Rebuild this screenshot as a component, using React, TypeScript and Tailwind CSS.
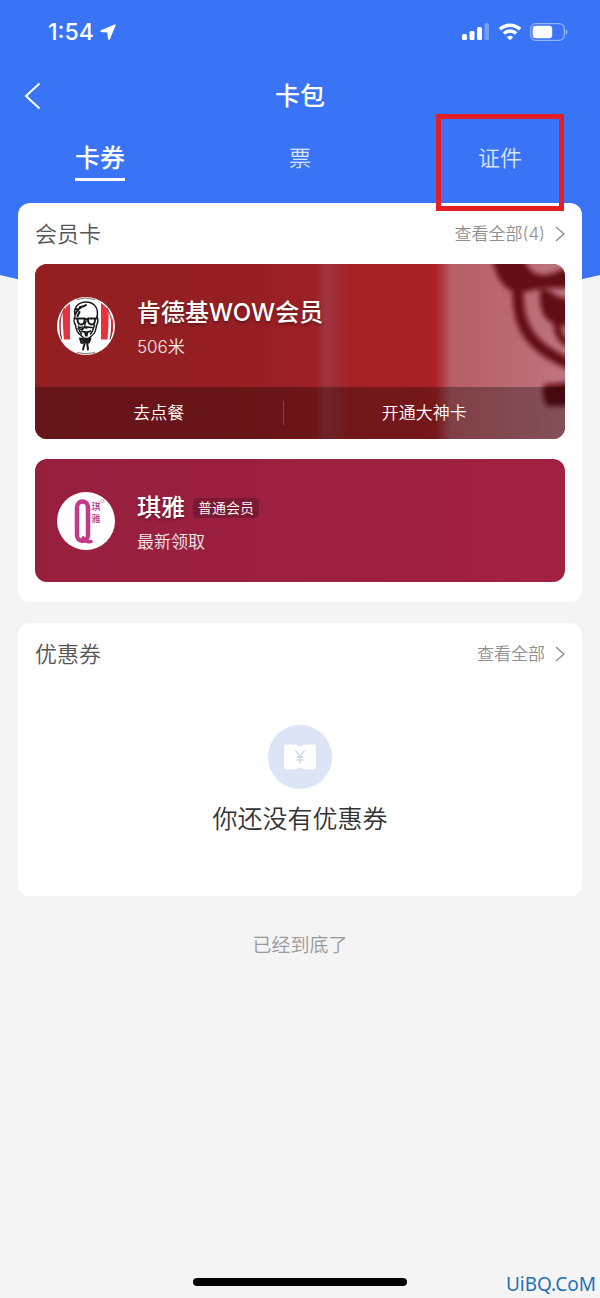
import React from "react";

const tabs = [
  { label: "卡券", active: true, marked: false },
  { label: "票", active: false, marked: false },
  { label: "证件", active: false, marked: true },
];

const StatusBar = () => {
  return (
    <div className="flex h-16 items-center justify-between pl-12 pr-8">
      <div className="flex items-center gap-1.5">
        <span className="text-[23px] font-medium leading-6">1:54</span>
        <svg width="16" height="17" viewBox="0 0 16 17" fill="currentColor">
          <path d="M14.600.4 1 6.300C-.1 6.800 0 7.900 1.200 8l6.100.5.8 6.600c.2 1.300 1.300 1.300 1.800.2L15.600 1.500C15.900.7 15.400.1 14.600.4Z" />
        </svg>
      </div>
      <div className="flex items-center gap-2">
        <svg width="28" height="18" viewBox="0 0 28 18" fill="currentColor">
          <rect x="0" y="11" width="5" height="6" rx="1.500" />
          <rect x="7.500" y="8" width="5" height="9" rx="1.500" />
          <rect x="15" y="4" width="5" height="13" rx="1.500" />
          <rect x="22.500" y="0" width="4.500" height="17" rx="1.500" opacity=".3" />
        </svg>
        <svg width="24" height="18" viewBox="0 0 24 18" fill="none" stroke="currentColor" strokeWidth="3.400">
          <path d="M1.900 6.300a14.500 14.500 0 0 1 20.200 0" />
          <path d="M5.900 10.500a8.800 8.800 0 0 1 12.200 0" />
          <path d="M12 17.300 8.900 14.200a4.500 4.500 0 0 1 6.200 0Z" fill="currentColor" stroke="none" />
        </svg>
        <svg width="38" height="18" viewBox="0 0 38 18" fill="none">
          <rect x=".7" y=".7" width="33.600" height="16.600" rx="5" stroke="currentColor" strokeWidth="1.300" opacity=".45" />
          <rect x="2.700" y="2.700" width="19.500" height="12.600" rx="3" fill="currentColor" />
          <path d="M35.800 6.300c2 .8 2 4.600 0 5.400Z" fill="currentColor" opacity=".5" />
        </svg>
      </div>
    </div>
  );
};

const Header = () => {
  return (
    <header className="relative z-10 text-white">
      <StatusBar />
      <div className="grid h-16 grid-cols-3 items-center px-6">
        <button type="button" aria-label="返回" className="justify-self-start">
          <svg width="18" height="28" viewBox="0 0 18 28" fill="none" stroke="currentColor" strokeWidth="2">
            <path d="M15.500 1.500 2 14l13.500 12.500" />
          </svg>
        </button>
        <h1 className="text-center text-[25px] font-medium leading-8">卡包</h1>
      </div>
      <nav className="grid h-[75px] grid-cols-3">
        {tabs.map((tab) => (
          <div key={tab.label} className="relative flex items-start justify-center pt-3">
            {tab.active ? (
              <button
                type="button"
                className="border-b-[3px] border-white pb-0.5 text-[25px] font-medium leading-9"
              >
                {tab.label}
              </button>
            ) : (
              <button type="button" className="text-[22px] font-[350] leading-9 text-white/80">
                {tab.label}
              </button>
            )}
            {tab.marked && (
              <span className="pointer-events-none absolute -bottom-2 -top-3.5 left-1/2 w-32 -translate-x-1/2 border-[5px] border-[#e31e25]" />
            )}
          </div>
        ))}
      </nav>
    </header>
  );
};

const SectionHead = ({ title, more }: { title: string; more: string }) => {
  return (
    <div className="flex h-[61px] items-center justify-between">
      <h2 className="text-[22px] font-[350] leading-8 text-[#555]">{title}</h2>
      <a href="#" className="flex items-center gap-2.5 text-[17px] font-[350] leading-6 text-[#8f8f8f]">
        {more}
        <svg width="10" height="16" viewBox="0 0 10 16" fill="none" stroke="currentColor" strokeWidth="1.500">
          <path d="m1 1 8 7-8 7" />
        </svg>
      </a>
    </div>
  );
};

const KfcLogo = () => {
  return (
    <svg className="shrink-0" width="58" height="58" viewBox="0 0 58 58">
      <defs>
        <clipPath id="kfc-round">
          <circle cx="29" cy="29" r="27.500" />
        </clipPath>
      </defs>
      <circle cx="29" cy="29" r="29" fill="#fff" />
      <g clipPath="url(#kfc-round)">
        <path d="M5.500 4H13v38.500H7Q5.500 30 5.500 4ZM44 4h7.500Q52 30 50.500 42.500H44Z" fill="#e5323c" />
        <path d="M2 14h1.800q-1 15 1 28.500H3ZM54.500 14H56v28.500h-2.800q2-14 1.300-28.500Z" fill="#e5323c" />
      </g>
      <path d="M4.800 42.500C2 32 2 20 7.500 11M53 42.500c3-11 2.500-22-3-31.500" fill="none" stroke="#5a2529" strokeWidth=".8" />
      <path d="M20 2.500q9-3 18 0M20 55.500q9 2.500 18 0" fill="none" stroke="#555" strokeWidth=".8" />
      <g fill="none" stroke="#191b1d" strokeWidth="1.500" strokeLinecap="round" strokeLinejoin="round">
        <path d="M18 18C16 10 22 5 29 5c8 0 13 6 11 15" />
        <path d="M18 19c-1.500 3-1 7 .5 9 .5 5 2 8 5 10l4 3.500h4l3.500-3c3-2 4-6 4.500-10 1.500-3 2-6 .5-9" />
        <path d="M18.500 17c1-4 4-3 4.500-7 2 0 4-.5 6-2M19 12c2 1 4 0 6-2.500M20.500 19l2-4" strokeWidth="2" />
        <path d="M18.500 21.500h9.500l1.500 1 1.500-1h8.500M20.500 22c0 4 1 5.500 4 5.500 2.500 0 3-2 3-5M31 22.500c0 3.500 1 5 4 5 2.500 0 3-2.500 3-5" strokeWidth="1.900" />
        <path d="M29 24c-1 3-2 4-1 6h3M21 31.500c3-2 5.500-2 8-.5 3-1.500 5-1 7.500 0M24.500 34q5 2.500 9 0M21.500 29l1 5 2 3M37.500 28l-2 6-2 3" />
        <path d="m23 41.500 5 1 5.500-1-1.500 4-3.500-1-4 1.500ZM28 45l-2 7.500M30 45l1 7.500" strokeWidth="2" />
      </g>
      <path d="M27 34.500h4.500l-1 5H28ZM24 42h9l-1.500 2.500H25ZM23 31.500l5-1-2 2.500h-3Z" fill="#191b1d" />
    </svg>
  );
};

const QiyaLogo = () => {
  return (
    <svg className="shrink-0" width="58" height="58" viewBox="0 0 58 58">
      <circle cx="29" cy="29" r="29" fill="#fff" />
      <path
        d="M20 43V15.500c0-8 11-8 11 0V43c0 8-11 8-11 0Z"
        fill="none"
        stroke="#c23a88"
        strokeWidth="4.500"
      />
      <path d="M26 46c2 3.500 4 4 8 3.500" fill="none" stroke="#c23a88" strokeWidth="3.600" strokeLinecap="round" />
      <g fill="#b03a83" fontWeight="500">
        <text x="34.500" y="18" fontSize="9">琪</text>
        <text x="34.500" y="29.500" fontSize="9">雅</text>
      </g>
      <circle cx="45.500" cy="9" r="1.500" fill="none" stroke="#b03a83" strokeWidth=".5" />
    </svg>
  );
};

// blurred brand artwork behind the first card, pinned to the right edge
const KfcArtwork = () => {
  return (
    <svg
      className="absolute inset-0 h-full w-full"
      viewBox="0 0 530 175"
      preserveAspectRatio="xMaxYMid slice"
      aria-hidden="true"
    >
      <defs>
        <linearGradient id="stripes">
          <stop offset="0" stopColor="#931f23" />
          <stop offset=".4" stopColor="#951f23" />
          <stop offset=".53" stopColor="#9d2025" />
          <stop offset=".548" stopColor="#a03542" />
          <stop offset=".575" stopColor="#a02a30" />
          <stop offset=".59" stopColor="#a32226" />
          <stop offset=".755" stopColor="#a92126" />
          <stop offset=".785" stopColor="#b75d66" />
          <stop offset="1" stopColor="#bd747e" />
        </linearGradient>
        <filter id="soft" x="-30%" y="-30%" width="160%" height="160%">
          <feGaussianBlur stdDeviation="2.800" />
        </filter>
      </defs>
      <rect width="530" height="175" fill="url(#stripes)" />
      <g filter="url(#soft)" fill="#640d19">
        <path d="M456-10h32c2 12 10 23 23 21 10-2 18-6 29-13v25c-12 2-24 0-36 2-14 3-22 4-29 1-9-5-15-16-19-36Z" />
        <path d="M483 20c-1 30 5 46 17 58 9 10 22 16 40 25" fill="none" stroke="#640d19" strokeWidth="11" />
        <path d="M505 26c12-3 9 8 35 10v26c-8 4-14-4-21-2-12-5-15-18-14-34Z" />
        <path d="M522 55c0 14 3 22 14 25" fill="none" stroke="#640d19" strokeWidth="7" />
        <path d="M508 124q2-5 8-4l24-2v24h-28q-5-8-4-18Z" />
      </g>
    </svg>
  );
};

const CouponIcon = () => {
  return (
    <svg width="64" height="64" viewBox="0 0 64 64">
      <circle cx="32" cy="32" r="32" fill="#dce5f6" />
      <path
        d="M19 19.500h9.500c1 2.500 6 2.500 7 0H45a3 3 0 0 1 3 3v19a3 3 0 0 1-3 3h-9.500c-1-2.500-6-2.500-7 0H19a3 3 0 0 1-3-3v-19a3 3 0 0 1 3-3Z"
        fill="#fff"
      />
      <path d="m27.500 25.500 4.500 6 4.500-6M32 31.500v7M28.500 32h7M28.500 35h7" fill="none" stroke="#ccd9f2" strokeWidth="1.500" />
    </svg>
  );
};

const App = () => {
  return (
    <div className="relative flex min-h-screen flex-col overflow-hidden bg-[#f4f4f4] font-['Inter','Noto_Sans_CJK_SC',sans-serif]">
      <svg
        className="absolute inset-x-0 top-0 h-80 w-full"
        viewBox="0 0 600 320"
        preserveAspectRatio="none"
        aria-hidden="true"
      >
        <path d="M0 0H600V275Q300 350 0 275Z" fill="#3974f6" />
      </svg>
      <Header />
      <main className="relative flex flex-col gap-[21px] px-[18px]">
        <section className="rounded-xl bg-white px-[17px] pb-5">
          <SectionHead title="会员卡" more="查看全部(4)" />
          <div className="flex flex-col gap-5">
            <article className="relative overflow-hidden rounded-xl bg-[#931f23] text-white">
              <KfcArtwork />
              <div className="relative flex h-[123px] items-center gap-[22px] px-[22px]">
                <KfcLogo />
                <div className="pt-1.5">
                  <h3 className="text-2xl font-medium leading-9 [text-shadow:0_2px_3px_rgba(0,0,0,0.35)]">
                    肯德基WOW会员
                  </h3>
                  <p className="text-[17px] font-[350] leading-8 text-white/90">506米</p>
                </div>
              </div>
              <div className="relative flex h-[52px] items-center bg-black/30">
                <button type="button" className="flex-auto text-[17px] font-[350] leading-6">
                  去点餐
                </button>
                <span className="h-6 w-px bg-white/20" />
                <button type="button" className="flex-auto text-[17px] font-[350] leading-6">
                  开通大神卡
                </button>
              </div>
            </article>
            <article className="flex h-[123px] items-center gap-[22px] rounded-xl bg-linear-to-r from-[#971f3e] to-[#a12142] px-[22px] text-white">
              <QiyaLogo />
              <div className="pt-1.5">
                <div className="flex items-center gap-2">
                  <h3 className="text-2xl font-medium leading-9 [text-shadow:0_2px_3px_rgba(0,0,0,0.35)]">琪雅</h3>
                  <span className="rounded-sm bg-black/20 px-[5px] text-sm font-[350] leading-5">普通会员</span>
                </div>
                <p className="text-[17px] font-[350] leading-8 text-white/90">最新领取</p>
              </div>
            </article>
          </div>
        </section>
        <section className="rounded-xl bg-white px-[17px] pb-[59px]">
          <SectionHead title="优惠券" more="查看全部" />
          <div className="flex flex-col items-center gap-3 pt-[41px]">
            <CouponIcon />
            <p className="text-[25px] font-[350] leading-9 text-[#333]">你还没有优惠券</p>
          </div>
        </section>
      </main>
      <p className="mt-8 text-center text-[19px] font-[350] leading-9 text-[#999]">已经到底了</p>
      <footer className="relative mt-auto flex justify-center pb-3 pt-8">
        <span className="h-2 w-[214px] rounded-full bg-black" />
        <span className="absolute bottom-0.5 right-1 font-['Noto_Sans',sans-serif] text-[19px] leading-6 text-[#2470b8]">
          UiBQ.CoM
        </span>
      </footer>
    </div>
  );
};

export default App;
